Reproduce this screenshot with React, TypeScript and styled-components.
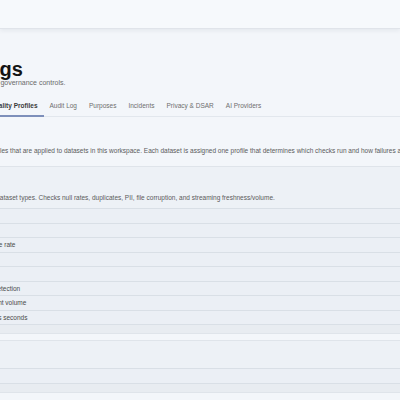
import React, { FC } from "react";
import styled, { createGlobalStyle } from "styled-components";

const GlobalStyle = createGlobalStyle`
  html, body {
    margin: 0;
    padding: 0;
    background: #f3f6fa;
    overflow: hidden;
  }
  body {
    font-family: "Liberation Sans", Arial, sans-serif;
    color: #555;
  }
`;

const tabs = ["Retention", "Quality Profiles", "Audit Log", "Purposes", "Incidents", "Privacy & DSAR", "AI Providers"];

const defaultChecks = [
  "Null rate",
  "Duplicates",
  "Max missing value rate",
  "PII scan",
  "Schema",
  "Corrupt upload detection",
  "Minimum log event volume",
  "Max file freshness seconds",
];

const App: FC = () => (
  <>
    <GlobalStyle />
    <TopBar />
    <Main>
      <Title>Settings</Title>
      <Subtitle>Data security and governance controls.</Subtitle>
      <TabBar>
        {tabs.map((t) => (
          <Tab key={t} active={t === "Quality Profiles"}>
            {t}
          </Tab>
        ))}
      </TabBar>
      <Intro>
        Quality control profiles that are applied to datasets in this workspace. Each dataset is assigned one
        profile that determines which checks run and how failures are handled.
      </Intro>
      <Card>
        <CardHead>
          <CardTitle>Default</CardTitle>
          <CardDesc>
            Applies to most dataset types. Checks null rates, duplicates, PII, file corruption, and streaming
            freshness/volume.
          </CardDesc>
        </CardHead>
        {defaultChecks.map((c) => (
          <CheckRow key={c}>{c}</CheckRow>
        ))}
        <CardFoot />
      </Card>
      <Card>
        <CardHead small>
          <CardTitle>Strict</CardTitle>
        </CardHead>
        <CheckRow>Null rate</CheckRow>
        <CardFoot />
      </Card>
    </Main>
  </>
);

export default App;

const TopBar = styled.header`
  height: 28px;
  background: #f6f9fc;
  border-bottom: 1px solid #e0e4ea;
  box-shadow: 0 2px 4px rgba(20, 30, 50, 0.06);
`;

const Main = styled.main`
  margin-left: -56px;
  padding-top: 30px;
  width: 720px;
`;

const Title = styled.h1`
  margin: 0;
  font-size: 20px;
  line-height: 20px;
  font-weight: 700;
  color: #141414;
`;

const Subtitle = styled.p`
  margin: -1px 0 0;
  font-size: 7px;
  line-height: 10px;
  color: #6a6a6a;
`;

const TabBar = styled.nav`
  display: flex;
  margin-top: 10px;
  border-bottom: 1px solid #e2e7ed;
`;

const Tab = styled.div<{ active?: boolean }>`
  padding: 3px 6px 4px;
  font-size: 6.5px;
  line-height: 10px;
  font-weight: ${(p) => (p.active ? 700 : 400)};
  color: ${(p) => (p.active ? "#3a3a3a" : "#6e6e6e")};
  border-bottom: 2px solid ${(p) => (p.active ? "#7d8fba" : "transparent")};
  margin-bottom: -1px;
`;

const Intro = styled.p`
  margin: 29px 0 0;
  font-size: 6.5px;
  line-height: 10px;
  color: #5a5a5a;
  white-space: nowrap;
`;

const Card = styled.section`
  margin-top: 10px;
  background: #edf1f6;
  border: 1px solid #dfe4ea;
  & + & {
    margin-top: 6px;
  }
`;

const CardHead = styled.div<{ small?: boolean }>`
  padding: ${(p) => (p.small ? "6px 5px 4px" : "6px 5px 5px")};
  height: ${(p) => (p.small ? "17px" : "auto")};
  overflow: hidden;
`;

const CardTitle = styled.h3`
  margin: 0;
  font-size: 8px;
  line-height: 12px;
  font-weight: 700;
  color: #333;
`;

const CardDesc = styled.p`
  margin: 8px 0 0;
  font-size: 6.5px;
  line-height: 10px;
  color: #5a5a5a;
  white-space: nowrap;
`;

const CheckRow = styled.div`
  height: 13.5px;
  padding: 0 4px;
  border-top: 1px solid #d9dfe6;
  font-size: 6.5px;
  line-height: 13.5px;
  color: #4a4a4a;
  background: #ebeff5;
  white-space: nowrap;
`;

const CardFoot = styled.div`
  height: 8px;
  border-top: 1px solid #d9dfe6;
  background: #e8ecf1;
`;
